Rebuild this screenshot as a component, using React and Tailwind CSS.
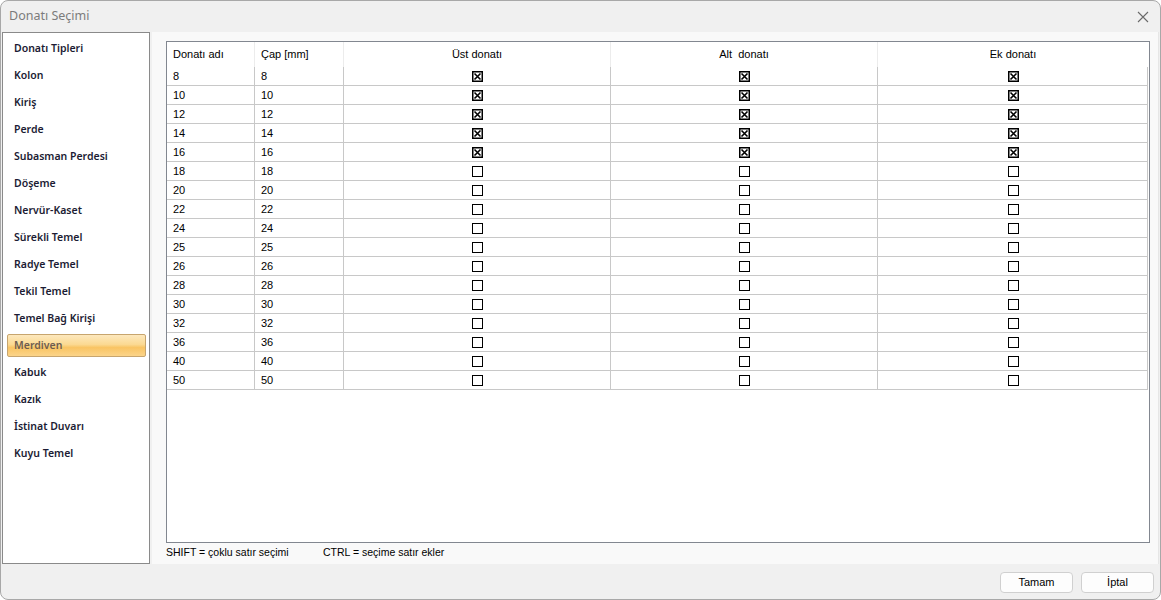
import React from "react";

const items = [
  "Donatı Tipleri",
  "Kolon",
  "Kiriş",
  "Perde",
  "Subasman Perdesi",
  "Döşeme",
  "Nervür-Kaset",
  "Sürekli Temel",
  "Radye Temel",
  "Tekil Temel",
  "Temel Bağ Kirişi",
  "Merdiven",
  "Kabuk",
  "Kazık",
  "İstinat Duvarı",
  "Kuyu Temel",
];

const sizes = [8, 10, 12, 14, 16, 18, 20, 22, 24, 25, 26, 28, 30, 32, 36, 40, 50];
const checked = new Set([8, 10, 12, 14, 16]);

function Box({ on }) {
  return (
    <svg width="11" height="11" viewBox="0 0 11 11" className="block">
      <rect x="0.5" y="0.5" width="10" height="10" fill="white" stroke="black" strokeWidth="1" />
      {on && (
        <>
          <rect x="1" y="1" width="9" height="9" fill="none" stroke="black" strokeWidth="1" />
          <path d="M2.5 2.5 L8.5 8.5 M8.5 2.5 L2.5 8.5" stroke="black" strokeWidth="1.6" />
        </>
      )}
    </svg>
  );
}

export default function App() {
  const font = { fontFamily: '"Liberation Sans", Arial, sans-serif' };
  return (
    <div
      className="w-[1161px] h-[600px] bg-[#f0f0f0] border border-[#a8a8a8] rounded-[8px] flex flex-col overflow-hidden"
      style={font}
    >
      {/* Title bar */}
      <div className="h-[31px] flex items-center justify-between pl-[8px] pr-[10px] shrink-0">
        <span className="text-[12.5px] text-[#7c7c7c] font-['Noto_Sans',sans-serif]">Donatı Seçimi</span>
        <svg width="12" height="12" viewBox="0 0 12 12" className="mr-[1px]">
          <path d="M1 1 L11 11 M11 1 L1 11" stroke="#6a6a6a" strokeWidth="1.1" />
        </svg>
      </div>

      {/* Body */}
      <div className="flex h-[532px] shrink-0">
        {/* Left list */}
        <div className="ml-[1px] w-[148px] bg-white border border-[#8a8a8a] pt-[2px] px-[3px] shrink-0">
          {items.map((it) => {
            const sel = it === "Merdiven";
            return (
              <div key={it} className="h-[27px] flex items-center">
                {sel ? (
                  <div className="h-[23px] w-[141px] ml-[1px] flex items-center pl-[6px] rounded-[2px] border border-[#c7a56e] bg-[linear-gradient(to_bottom,#fde8bd_0%,#fbd992_45%,#f9c463_60%,#fbd48a_100%)] text-[#6e5d50] text-[10.5px] font-semibold font-['Noto_Sans',sans-serif]">
                    {it}
                  </div>
                ) : (
                  <span className="pl-[8px] text-[10.5px] text-[#1c1c34] font-semibold font-['Noto_Sans',sans-serif]">
                    {it}
                  </span>
                )}
              </div>
            );
          })}
        </div>

        {/* Right panel */}
        <div className="ml-[2px] w-[1007px] bg-[#f9f9f9] border-r border-[#e6e6e6] flex flex-col pt-[9px] pl-[14px]">
          <div className="w-[984px] h-[502px] bg-white border border-[#828790] text-[11px] text-black">
            {/* header */}
            <div className="flex h-[25px]">
              <div className="w-[88px] border-r border-[#ececec] flex items-center pl-[6px]">Donatı adı</div>
              <div className="w-[89px] border-r border-[#ececec] flex items-center pl-[6px]">Çap [mm]</div>
              <div className="w-[267px] border-r border-[#ececec] flex items-center justify-center">Üst donatı</div>
              <div className="w-[267px] border-r border-[#ececec] flex items-center justify-center">Alt&nbsp;&nbsp;donatı</div>
              <div className="w-[270px] flex items-center justify-center">Ek donatı</div>
            </div>
            {sizes.map((s) => {
              const on = checked.has(s);
              return (
                <div key={s} className="flex h-[19px] w-[981px] border-b border-[#c8c8c8]">
                  <div className="w-[88px] border-r border-[#c8c8c8] flex items-center pl-[6px]">{s}</div>
                  <div className="w-[89px] border-r border-[#c8c8c8] flex items-center pl-[6px]">{s}</div>
                  <div className="w-[267px] border-r border-[#c8c8c8] flex items-center justify-center pl-[1px]"><Box on={on} /></div>
                  <div className="w-[267px] border-r border-[#c8c8c8] flex items-center justify-center"><Box on={on} /></div>
                  <div className="w-[270px] border-r border-[#c8c8c8] flex items-center justify-center pl-[2px]"><Box on={on} /></div>
                </div>
              );
            })}
          </div>
          <div className="h-[20px] flex items-center text-[10.5px] text-black">
            <span className="w-[157px]">SHIFT = çoklu satır seçimi</span>
            <span>CTRL = seçime satır ekler</span>
          </div>
        </div>
      </div>

      {/* Bottom bar */}
      <div className="flex-1 flex items-start justify-end pt-[8px] pr-[6px] gap-[8px]">
        <button className="w-[73px] h-[21px] bg-[#fdfdfd] border border-[#d0d0d0] rounded-[4px] text-[11px] text-black">Tamam</button>
        <button className="w-[73px] h-[21px] bg-[#fdfdfd] border border-[#d0d0d0] rounded-[4px] text-[11px] text-black">İptal</button>
      </div>
    </div>
  );
}
